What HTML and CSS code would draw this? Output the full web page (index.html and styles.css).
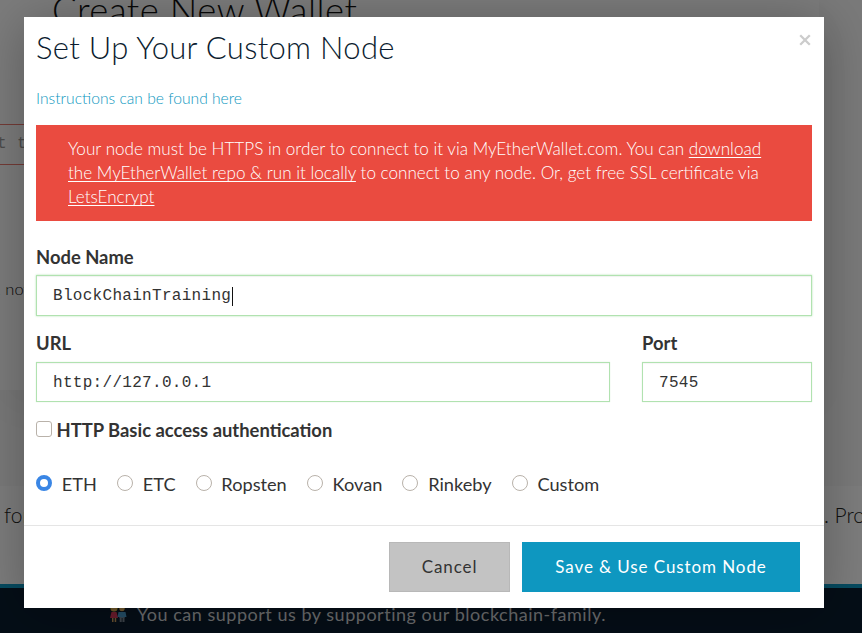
FILE: index.html
```html
<!DOCTYPE html>
<html lang="en">
<head>
<meta charset="utf-8">
<title>Set Up Your Custom Node</title>
<link rel="stylesheet" href="styles.css">
</head>
<body>
<div class="page">
  <main class="wallet">
    <h1 class="wallet-title">Create New Wallet</h1>
    <div class="wallet-input">t t</div>
    <p class="wallet-note"><a>.</a> not</p>
  </main>
  <div class="spacer"></div>
  <section class="about"><span>for</span><span class="about-end">. Pro</span></section>
  <footer class="support">
    <svg class="family" viewBox="0 0 18 18">
      <circle cx="5" cy="4" r="3.6" fill="#e0b83d"/><circle cx="5" cy="5" r="2.2" fill="#e0b060"/>
      <path d="M2.5 8h5l1.5 6H1z" fill="#d8395b"/><path d="M3 14h1.5v4H3zM5.7 14h1.5v4H5.7z" fill="#d0a060"/>
      <circle cx="13" cy="4" r="3" fill="#a98230"/><circle cx="13" cy="5" r="2.3" fill="#e0b060"/>
      <path d="M9.5 8h7l1 5h-2v1h-5v-1h-2z" fill="#4a9fd0"/><path d="M10.7 13h2v5h-2zM13.5 13h2v5h-2z" fill="#7b8794"/>
    </svg>
    <span>You can support us by supporting our blockchain-family.</span>
  </footer>
</div>
<div class="overlay">
  <form class="modal">
    <div class="modal-body">
      <header class="modal-head">
        <h2 class="title">Set Up Your Custom Node</h2>
        <button type="button" class="close" aria-label="Close">
          <svg viewBox="0 0 12 12"><path d="M1.2 1.2l9.6 9.6M10.8 1.2l-9.6 9.6" stroke="#ccc" stroke-width="2.3"/></svg>
        </button>
      </header>
      <a class="help">Instructions can be found here</a>
      <div class="alert">Your node must be HTTPS in order to connect to it via MyEtherWallet.com. You can <a>download the MyEtherWallet repo &amp; run it locally</a> to connect to any node. Or, get free SSL certificate via <a>LetsEncrypt</a></div>
      <label class="label">Node Name</label>
      <div class="field focused">BlockChainTraining<i class="caret"></i></div>
      <div class="row">
        <div><label class="label">URL</label><div class="field">http://127.0.0.1</div></div>
        <div><label class="label">Port</label><div class="field">7545</div></div>
      </div>
      <label class="auth"><i class="box"></i>HTTP Basic access authentication</label>
      <div class="radios">
        <label><i class="radio on"></i>ETH</label>
        <label><i class="radio"></i>ETC</label>
        <label><i class="radio"></i>Ropsten</label>
        <label><i class="radio"></i>Kovan</label>
        <label><i class="radio"></i>Rinkeby</label>
        <label><i class="radio"></i>Custom</label>
      </div>
    </div>
    <div class="actions">
      <button type="button" class="btn cancel">Cancel</button>
      <button type="button" class="btn save">Save &amp; Use Custom Node</button>
    </div>
  </form>
</div>
</body>
</html>
```

FILE: styles.css
```css
* { box-sizing: border-box; }
body { margin: 0; height: 633px; overflow: hidden; font-family: Lato, sans-serif; color: #333; }
.page { height: 633px; display: flex; flex-direction: column; background: #f5f5f5; }
.wallet { height: 390px; flex: none; margin-right: 43px; background: #f8f8f8; box-shadow: 0 16px 48px rgba(0,0,0,.05); }
.wallet-title { margin: 0; height: 124px; padding-left: 52px; font-size: 36.5px; line-height: 21px; font-weight: 300; letter-spacing: .5px; color: #111; }
.wallet-input { height: 41px; border: 1px solid #e8776d; border-left: 0; font: 16px/38px "Liberation Mono", monospace; letter-spacing: .4px; color: #999; white-space: pre; text-indent: -3px; }
.wallet-note { margin: 112px 0 0; font-size: 16.5px; line-height: 24px; white-space: pre; font-weight: 300; text-indent: -3px; color: #111; }
.wallet-note a { color: #0e97c0; }
.spacer { height: 96px; }
.about { height: 98px; flex: none; display: flex; background: #fbfbfb; padding: 15px 0 0 4px; font-size: 21px; line-height: 28px; font-weight: 300; color: #222; }
.about-end { margin-left: 794px; white-space: nowrap; }
.support { flex: 1; border-top: 4px solid #0e97c0; background: #0b1c2f; color: #d8dadd; display: flex; align-items: flex-start; padding: 14px 0 0 109px; gap: 9px; font-size: 18px; line-height: 25px; letter-spacing: .52px; white-space: nowrap; }
.family { width: 18px; height: 18px; margin: 2px 1px 0 0; }
.overlay { position: absolute; inset: 0; overflow: hidden; background: rgba(0,0,0,.5); padding: 17px 24px 0; }
.modal { width: 800px; height: 591px; background: #fff; box-shadow: 0 5px 50px rgba(0,0,0,.28); }
.modal-body { height: 509px; padding: 10px 12px 0; border-bottom: 1px solid #e5e5e5; }
.modal-head { display: flex; justify-content: space-between; align-items: flex-start; height: 43px; }
.title { margin: 0; font-size: 31px; line-height: 40px; font-weight: 300; letter-spacing: .3px; color: #0b1c2f; }
.close { width: 12px; height: 12px; padding: 0; border: 0; background: none; margin: 7px 1px 0 0; display: flex; }
.close svg { width: 12px; height: 12px; }
.help { display: block; margin-top: 16px; height: 39px; font-size: 15.65px; line-height: 24px; font-weight: 300; color: #0e97c0; }
.alert { height: 96px; padding: 12px 32px; background: #ea4b40; color: #fff; font-size: 17.12px; line-height: 24px; font-weight: 300; }
.alert a { text-decoration: underline 1px; text-underline-offset: 2px; text-decoration-skip-ink: none; }
.label { display: block; margin-top: 24px; font-size: 18.4px; line-height: 25px; font-weight: 700; }
.field { display: flex; align-items: center; height: 41px; margin-top: 5px; padding: 1px 16px 0; border: 1px solid #b1e2b0; box-shadow: inset 0 1px 1px rgba(0,0,0,.04), 0 0 1px #cdeccc; font-family: "Liberation Mono", monospace; font-size: 16px; letter-spacing: .3px; }
.focused { box-shadow: inset 0 1px 1px rgba(0,0,0,.06), 0 0 2px #b1e2b0; }
.caret { width: 1px; height: 19px; background: #111; margin-left: .5px; }
.row { display: grid; grid-template-columns: 574px 170px; gap: 32px; margin-top: 15px; }
.row .label { margin-top: 0; }
.row .field { margin-top: 6px; height: 40px; }
.auth { display: flex; align-items: center; margin-top: 15px; height: 25px; font-size: 18.4px; font-weight: 700; }
.box { width: 16px; height: 16px; margin: -2px 4.5px 0 0; border: 1px solid #b9b2aa; border-radius: 3px; }
.radios { display: flex; gap: 20px; margin-top: 30px; font-size: 18.2px; line-height: 25px; }
.radios label { display: flex; align-items: center; }
.radio { width: 16px; height: 16px; margin: -3px 9.8px 0 0; border: 1px solid #b9b2aa; border-radius: 50%; }
.radio.on { border: 4px solid #3a86e5; }
.actions { display: flex; justify-content: flex-end; gap: 12px; padding: 16px 24px 0; }
.btn { height: 50px; padding: 0; font: 17px/24px Lato, sans-serif; letter-spacing: .91px; border: 1px solid #0e97c0; }
.cancel { width: 121px; background: #c3c3c3; border-color: #b8b8b8; color: #333; }
.save { width: 278px; background: #0e97c0; color: #fff; }
```
